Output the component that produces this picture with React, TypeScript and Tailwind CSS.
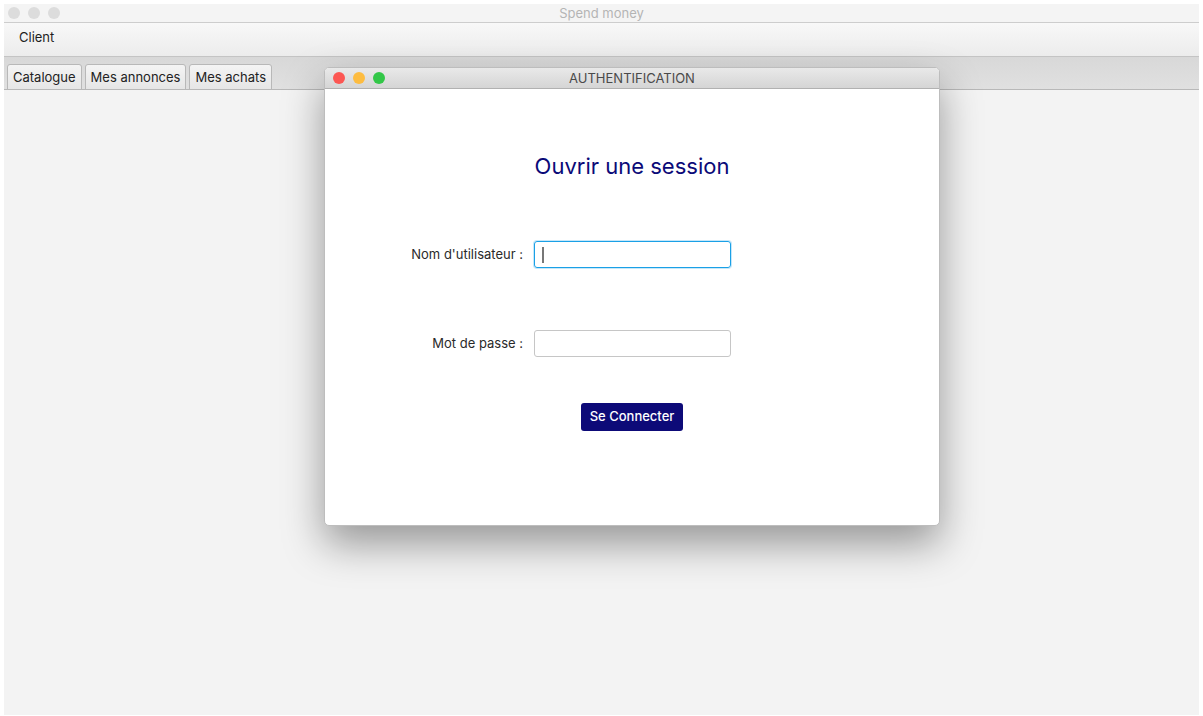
import React from 'react';

// Spend money — client window with the login dialog on top

const tabs = ['Catalogue', 'Mes annonces', 'Mes achats'];

function Lights({ colors }: { colors: string[] }) {
  return (
    <div className="flex items-center gap-[8px]">
      {colors.map((c, i) => (
        <span key={i} className={`block w-[12px] h-[12px] rounded-full ${c}`} />
      ))}
    </div>
  );
}

export default function App() {
  return (
    <div className="w-[1203px] h-[716px] bg-white p-[4px] font-['Inter','Liberation_Sans',sans-serif] text-[13px] text-[#222]">
      <div className="relative w-[1195px] h-[711px] flex flex-col bg-[#f3f3f3]">
        {/* title bar */}
        <div className="relative h-[19px] bg-[#f4f4f4] border-b border-[#cdcdcd] flex items-center pl-[4px]">
          <Lights colors={['bg-[#dcdcdc]', 'bg-[#dcdcdc]', 'bg-[#dcdcdc]']} />
          <span className="absolute inset-x-0 text-center text-[13px] text-[#b4b4b4] leading-[18px]">Spend money</span>
        </div>

        {/* menu bar */}
        <div className="h-[34px] bg-gradient-to-b from-[#f8f8f8] to-[#ececec] border-b border-[#c4c4c4] flex items-center pl-[15px] pb-[4px]">
          <span className="text-[13px] text-[#1e1e1e]">Client</span>
        </div>

        {/* tab strip */}
        <div className="h-[33px] bg-gradient-to-b from-[#d8d8d8] to-[#e0e0e0] border-b border-[#b8b8b8] flex items-end gap-[3px] pl-[3px]">
          {tabs.map(t => (
            <div
              key={t}
              className="h-[26px] -mb-px px-[5px] pt-px flex items-center bg-gradient-to-b from-[#f4f4f4] to-[#e6e6e6] border border-[#b8b8b8] rounded-t-[3px] text-[13px] text-[#222]"
            >
              {t}
            </div>
          ))}
        </div>

        <div className="flex-1 bg-[#f3f3f3]" />

        {/* login dialog */}
        <div className="absolute left-[320px] top-[63px] w-[616px] h-[459px] bg-white rounded-[5px] border border-[#bdbdbd] shadow-[0_18px_40px_rgba(0,0,0,0.38)] flex flex-col overflow-hidden">
          <div className="relative h-[21px] bg-gradient-to-b from-[#e9e9e9] to-[#d5d5d5] border-b border-[#b1b1b1] flex items-center pl-[8px]">
            <Lights colors={['bg-[#fc5753]', 'bg-[#fdbc40]', 'bg-[#33c748]']} />
            <span className="absolute inset-x-0 text-center text-[13px] text-[#4a4a4a] leading-[20px]">AUTHENTIFICATION</span>
          </div>

          <div className="flex-1 flex flex-col pt-[63px]">
            <h1 className="text-center text-[22px] leading-[28px] text-[#0b0a78]">Ouvrir une session</h1>

            <div className="flex items-center mt-[61px]">
              <label className="w-[209px] pr-[11px] text-right text-[13px] text-[#2a2a2a]">Nom d'utilisateur :</label>
              <div className="w-[197px] h-[27px] rounded-[3px] border border-[#1aa0e6] shadow-[0_0_0_1px_rgba(26,160,230,0.25)] flex items-center pl-[7px]">
                <span className="block w-[2px] h-[16px] bg-[#777]" />
              </div>
            </div>

            <div className="flex items-center mt-[62px]">
              <label className="w-[209px] pr-[11px] text-right text-[13px] text-[#2a2a2a]">Mot de passe :</label>
              <input className="w-[197px] h-[27px] rounded-[3px] border border-[#c6c6c6] outline-none" />
            </div>

            <div className="flex justify-center mt-[46px]">
              <button className="w-[102px] h-[28px] rounded-[3px] bg-[#0d0a78] text-white text-[13px] font-medium">Se Connecter</button>
            </div>
          </div>
        </div>
      </div>
    </div>
  );
}
